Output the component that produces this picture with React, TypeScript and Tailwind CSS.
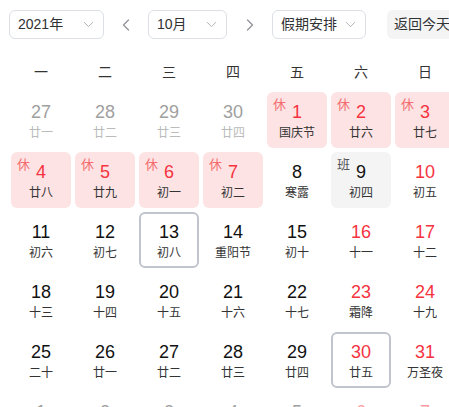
import React from "react";
import { ChevronDown, ChevronLeft, ChevronRight } from "lucide-react";

type Cell = {
  d: number;
  l: string;
  other?: boolean;
  red?: boolean;
  rest?: boolean;
  work?: boolean;
  today?: boolean;
};

const rows: Cell[][] = [
  [
    { d: 27, l: "廿一", other: true },
    { d: 28, l: "廿二", other: true },
    { d: 29, l: "廿三", other: true },
    { d: 30, l: "廿四", other: true },
    { d: 1, l: "国庆节", rest: true },
    { d: 2, l: "廿六", rest: true },
    { d: 3, l: "廿七", rest: true },
  ],
  [
    { d: 4, l: "廿八", rest: true },
    { d: 5, l: "廿九", rest: true },
    { d: 6, l: "初一", rest: true },
    { d: 7, l: "初二", rest: true },
    { d: 8, l: "寒露" },
    { d: 9, l: "初四", work: true },
    { d: 10, l: "初五", red: true },
  ],
  [
    { d: 11, l: "初六" },
    { d: 12, l: "初七" },
    { d: 13, l: "初八", today: true },
    { d: 14, l: "重阳节" },
    { d: 15, l: "初十" },
    { d: 16, l: "十一", red: true },
    { d: 17, l: "十二", red: true },
  ],
  [
    { d: 18, l: "十三" },
    { d: 19, l: "十四" },
    { d: 20, l: "十五" },
    { d: 21, l: "十六" },
    { d: 22, l: "十七" },
    { d: 23, l: "霜降", red: true },
    { d: 24, l: "十九", red: true },
  ],
  [
    { d: 25, l: "二十" },
    { d: 26, l: "廿一" },
    { d: 27, l: "廿二" },
    { d: 28, l: "廿三" },
    { d: 29, l: "廿四" },
    { d: 30, l: "廿五", red: true, today: true },
    { d: 31, l: "万圣夜", red: true },
  ],
  [
    { d: 1, l: "廿七", other: true },
    { d: 2, l: "廿八", other: true },
    { d: 3, l: "廿九", other: true },
    { d: 4, l: "三十", other: true },
    { d: 5, l: "初一", other: true },
    { d: 6, l: "初二", other: true, red: true },
    { d: 7, l: "立冬", other: true, red: true },
  ],
];

const weekdays = ["一", "二", "三", "四", "五", "六", "日"];

function Select({ label, w }: { label: string; w: string }) {
  return (
    <div
      className={`${w} shrink-0 h-[29px] flex items-center justify-between pl-[8px] pr-[6px] border border-[#dcdfe6] rounded-[6px] bg-white text-[14px] text-[#303133]`}
    >
      <span>{label}</span>
      <ChevronDown size={17} strokeWidth={1.3} color="#a8abb2" />
    </div>
  );
}

function DayCell({ c }: { c: Cell }) {
  let bg = "";
  if (c.rest) bg = "bg-[#fde3e4]";
  else if (c.work) bg = "bg-[#f4f4f5]";
  const border = c.today ? "border-2 border-[#c0c4cc]" : "border-2 border-transparent";
  let numColor = "text-[#111111]";
  let lunarColor = "text-[#333333]";
  if (c.other) {
    numColor = c.red ? "text-[#f9a0a0]" : "text-[#a0a0a0]";
    lunarColor = "text-[#bbbbbb]";
  } else if (c.red || c.rest) {
    numColor = "text-[#f5333f]";
  }
  return (
    <div className="p-[2px]">
      <div
        className={`relative h-[56px] rounded-[6px] ${bg} ${border} flex flex-col items-center pt-[7px]`}
      >
        {c.rest && (
          <span className="absolute left-[4px] top-[3px] text-[13px] leading-[16px] text-[#f56c6c]">
            休
          </span>
        )}
        {c.work && (
          <span className="absolute left-[4px] top-[3px] text-[13px] leading-[16px] text-[#555555]">
            班
          </span>
        )}
        <span className={`text-[18px] leading-[22px] ${numColor}`}>{c.d}</span>
        <span className={`mt-[2px] text-[12px] leading-[16px] ${lunarColor}`}>{c.l}</span>
      </div>
    </div>
  );
}

export default function App() {
  return (
    <div
      className="w-[449px] h-[407px] overflow-hidden bg-white"
      style={{ fontFamily: '"Liberation Sans", "Noto Sans CJK SC", sans-serif' }}
    >
      <div className="flex items-center pt-[10px] pl-[9px] whitespace-nowrap">
        <Select label="2021年" w="w-[95px]" />
        <div className="w-[44px] shrink-0 flex justify-center">
          <ChevronLeft size={20} strokeWidth={1.5} color="#909399" />
        </div>
        <Select label="10月" w="w-[79px]" />
        <div className="w-[45px] shrink-0 flex justify-center">
          <ChevronRight size={20} strokeWidth={1.5} color="#909399" />
        </div>
        <Select label="假期安排" w="w-[94px]" />
        <div className="ml-[21px] h-[29px] flex items-center px-[7px] rounded-[6px] bg-[#f4f4f5] text-[14px] text-[#303133] shrink-0">
          返回今天
        </div>
      </div>
      <div className="mt-[21px] ml-[9px] grid grid-cols-[repeat(7,64px)] h-[24px] items-center">
        {weekdays.map((w) => (
          <div key={w} className="text-center text-[14px] text-[#333333]">
            {w}
          </div>
        ))}
      </div>
      <div className="mt-[6px] ml-[9px] grid grid-cols-[repeat(7,64px)]">
        {rows.flat().map((c, i) => (
          <DayCell key={i} c={c} />
        ))}
      </div>
    </div>
  );
}
